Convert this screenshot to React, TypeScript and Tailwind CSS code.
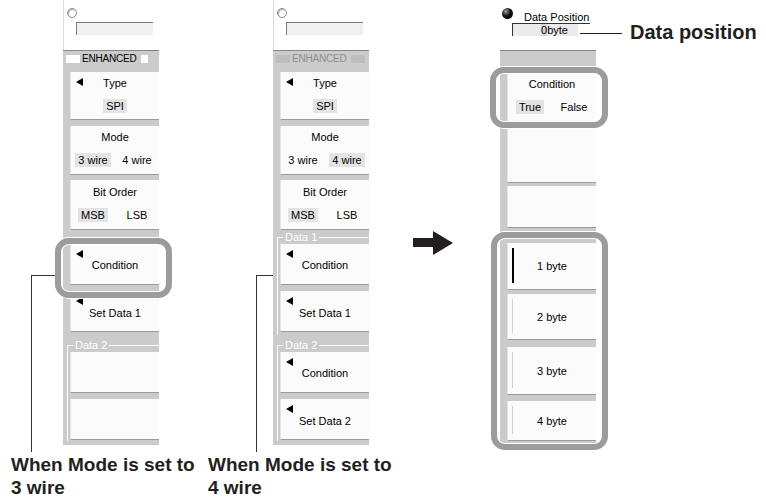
import React from "react";

type BtnProps = { className?: string; arrow?: boolean; children?: React.ReactNode };

function Tri() {
  return (
    <span className="absolute left-[5px] top-[6px] w-0 h-0 border-y-[4px] border-y-transparent border-r-[7px] border-r-black" />
  );
}

function Btn({ className = "", arrow = false, children }: BtnProps) {
  return (
    <div
      className={`relative ml-[7px] bg-[#fbfbfb] border-b border-b-[#9a9a9a] border-l border-l-[#e4e4e4] flex flex-col items-center ${className}`}
    >
      {arrow && <Tri />}
      {children}
    </div>
  );
}

function Opt({ on, children }: { on?: boolean; children: React.ReactNode }) {
  return (
    <div className="flex justify-center">
      <span className={`px-[3px] h-[14px] leading-[14px] ${on ? "bg-[#e3e3e3]" : ""}`}>{children}</span>
    </div>
  );
}

function Group({ label, tall }: { label: string; tall?: boolean }) {
  return (
    <div className={`relative ${tall ? "h-[20px]" : "h-[14px]"}`}>
      <div className={`absolute left-[4px] right-0 border-t border-white ${tall ? "top-[13px]" : "top-[7px]"}`} />
      <div
        className={`absolute left-[4px] w-0 border-l border-white ${tall ? "top-[13px] h-[96px]" : "top-[7px] h-[98px]"}`}
      />
      <span
        className={`absolute left-[10px] px-[2px] bg-[#cbcbcb] text-white text-[11px] leading-[12px] ${tall ? "top-[7px]" : "top-[1px]"}`}
      >
        {label}
      </span>
    </div>
  );
}

function TopArea() {
  return (
    <div className="h-[50px] bg-white border-l border-[#dcdcdc] flex flex-col">
      <span className="ml-[3px] mt-[8px] w-[10px] h-[10px] rounded-full border border-[#8a8a8a] bg-white shadow-[inset_1px_1px_1px_#b0b0b0]" />
      <div className="ml-[12px] mt-[4px] w-[77px] h-[13px] bg-[#f0f0f0] border-t border-l border-[#7a7a7a]" />
    </div>
  );
}

function Enhanced({ dim }: { dim?: boolean }) {
  return (
    <div className="h-[21px] pt-[2px]">
      <div className="flex items-center h-[11px] pl-[3px]">
        <span className={`w-[14px] h-[8px] ${dim ? "bg-[#bdbdbd]" : "bg-white"}`} />
        <span
          className={`ml-[2px] text-[10px] leading-[11px] tracking-[-0.2px] ${dim ? "text-[#8e8e8e]" : "text-black"}`}
        >
          ENHANCED
        </span>
        <span className={`ml-[4px] h-[8px] ${dim ? "w-[14px] bg-[#bdbdbd]" : "w-[7px] bg-white"}`} />
      </div>
    </div>
  );
}

function LeftPanel({ four }: { four?: boolean }) {
  return (
    <div className="w-[96px] h-[445px] bg-[#cbcbcb] flex flex-col text-[11px] text-black">
      <TopArea />
      <div className="h-px bg-[#858585]" />
      <Enhanced dim={four} />
      <Btn arrow className="h-[48px]">
        <span className="mt-[4px] leading-[14px]">Type</span>
        <div className="mt-[9px]">
          <Opt on>SPI</Opt>
        </div>
      </Btn>
      <div className="h-[6px]" />
      <Btn className="h-[49px]">
        <span className="mt-[4px] leading-[14px]">Mode</span>
        <div className="mt-[9px] w-full grid grid-cols-2">
          <Opt on={!four}>3 wire</Opt>
          <Opt on={four}>4 wire</Opt>
        </div>
      </Btn>
      <div className="h-[5px]" />
      <Btn className="h-[50px]">
        <span className="mt-[5px] leading-[14px]">Bit Order</span>
        <div className="mt-[9px] w-full grid grid-cols-2">
          <Opt on>MSB</Opt>
          <Opt>LSB</Opt>
        </div>
      </Btn>
      {four ? <Group label="Data 1" /> : <div className="h-[14px]" />}
      <Btn arrow className="h-[41px]">
        <span className="mt-[14px] leading-[14px]">Condition</span>
      </Btn>
      <div className="h-[6px]" />
      <Btn arrow className="h-[41px]">
        <span className="mt-[15px] leading-[14px]">Set Data 1</span>
      </Btn>
      <Group label="Data 2" tall />
      <Btn arrow={four} className="h-[41px]">
        {four && <span className="mt-[14px] leading-[14px]">Condition</span>}
      </Btn>
      <div className="h-[6px]" />
      <Btn arrow={four} className="h-[41px]">
        {four && <span className="mt-[15px] leading-[14px]">Set Data 2</span>}
      </Btn>
    </div>
  );
}

function ByteBtn({ label, active, className }: { label: string; active?: boolean; className: string }) {
  return (
    <Btn className={`${className} justify-center`}>
      <span
        className={`absolute left-[4px] top-[5px] bottom-[6px] ${active ? "w-[2px] bg-black" : "w-px bg-[#cfcfcf]"}`}
      />
      <span className="leading-[14px]">{label}</span>
    </Btn>
  );
}

function RightPanel() {
  return (
    <div className="w-[96px] h-[445px] bg-[#cbcbcb] flex flex-col text-[11px] text-black">
      <div className="h-[50px] bg-white flex flex-col">
        <div className="flex items-start pl-[2px]">
          <span className="mt-[8px] w-[11px] h-[11px] rounded-full bg-[radial-gradient(circle_at_35%_30%,#9a9a9a_0,#111_45%,#000_100%)]" />
          <span className="ml-[11px] mt-[11px] leading-[12px]">Data Position</span>
        </div>
        <div className="ml-[12px] w-[78px] h-[13px] border-t border-[#333]">
          <div className="w-[66px] h-[12px] bg-[#ebebeb] border-l border-[#333] pl-[28px] leading-[12px]">
            <span className="bg-[#d6d6d6]">0</span>byte
          </div>
        </div>
      </div>
      <div className="h-px bg-[#858585]" />
      <div className="h-[22px]" />
      <Btn className="h-[50px]">
        <span className="mt-[4px] leading-[14px]">Condition</span>
        <div className="mt-[9px] w-full grid grid-cols-2">
          <Opt on>True</Opt>
          <Opt>False</Opt>
        </div>
      </Btn>
      <div className="h-[6px]" />
      <Btn className="h-[54px]" />
      <div className="h-[3px]" />
      <Btn className="h-[42px]" />
      <div className="h-[15px]" />
      <ByteBtn label="1 byte" active className="h-[47px]" />
      <div className="h-[4px]" />
      <ByteBtn label="2 byte" className="h-[46px]" />
      <div className="h-[7px]" />
      <ByteBtn label="3 byte" className="h-[48px]" />
      <div className="h-[6px]" />
      <ByteBtn label="4 byte" className="h-[40px]" />
    </div>
  );
}

function Ring({ className }: { className: string }) {
  return (
    <div
      className={`absolute rounded-[14px] border-[6px] border-[#9c9c9c] shadow-[inset_0_0_0_1px_#ffffff,0_0_0_1px_#ffffff] ${className}`}
    />
  );
}

export default function App() {
  return (
    <div className="relative w-[766px] h-[499px] bg-white overflow-hidden font-['Liberation_Sans',Arial,sans-serif]">
      <div className="flex pl-[63px]">
        <LeftPanel />
        <div className="ml-[114px]">
          <LeftPanel four />
        </div>
        <div className="ml-[131px]">
          <RightPanel />
        </div>
      </div>

      <div className="flex pl-[11px] mt-[8px] text-[19px] leading-[23px] font-bold text-[#231f20]">
        <div className="w-[197px]">
          When Mode is set to
          <br />3 wire
        </div>
        <div>
          When Mode is set to
          <br />4 wire
        </div>
      </div>

      {/* highlight rings */}
      <Ring className="left-[55px] top-[238px] w-[117px] h-[60px]" />
      <Ring className="left-[490px] top-[67px] w-[118px] h-[61px]" />
      <Ring className="left-[491px] top-[232px] w-[117px] h-[218px]" />

      {/* connector lines */}
      <div className="absolute left-[31px] top-[275px] w-[24px] h-px bg-[#333]" />
      <div className="absolute left-[31px] top-[275px] w-px h-[177px] bg-[#333]" />
      <div className="absolute left-[256px] top-[275px] w-[17px] h-px bg-[#333]" />
      <div className="absolute left-[256px] top-[275px] w-px h-[177px] bg-[#333]" />

      {/* arrow */}
      <svg className="absolute left-[413px] top-[231px]" width="41" height="25" viewBox="0 0 41 25">
        <polygon points="0,7 20,7 20,0 40,12 20,24 20,16 0,16" fill="#231f20" />
      </svg>

      {/* data position callout */}
      <div className="absolute left-[580px] top-[33px] w-[42px] h-px bg-[#231f20]" />
      <div className="absolute left-[630px] top-[20px] text-[20px] leading-[24px] font-bold text-[#231f20]">
        Data position
      </div>
    </div>
  );
}
